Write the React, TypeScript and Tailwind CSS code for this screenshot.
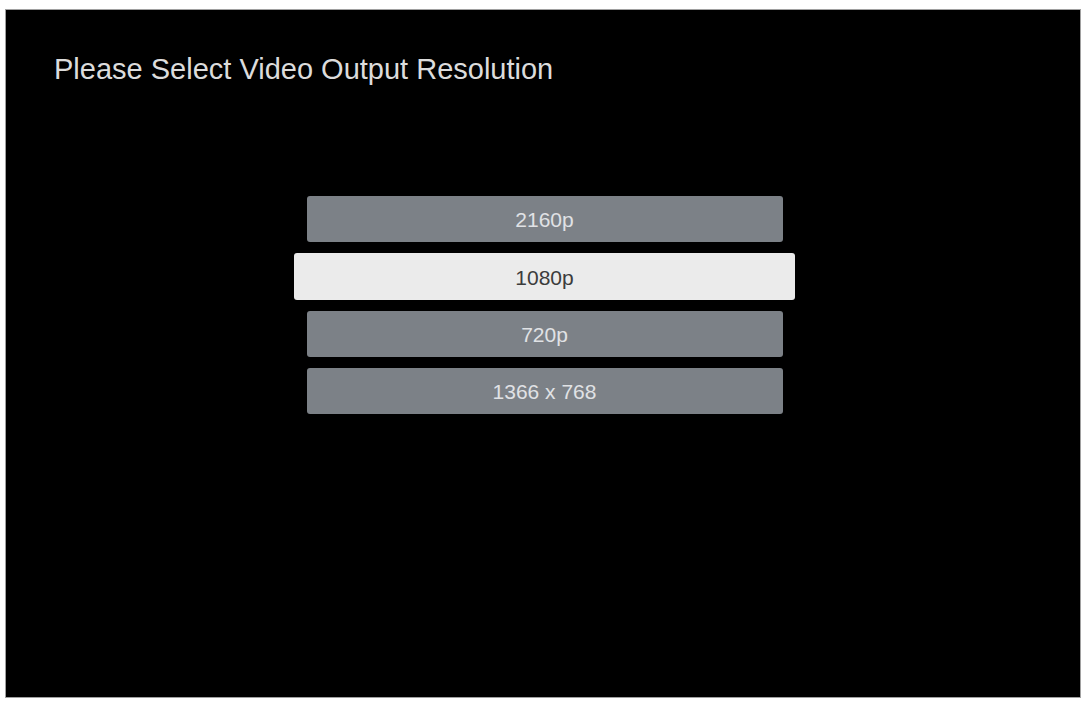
const resolutions = ['2160p', '1080p', '720p', '1366 x 768'];
const selected = '1080p';

export default function App() {
  return (
    <div className="w-[1085px] h-[701px] bg-white pt-[9px] pl-[5px]">
      <div
        className="w-[1076px] h-[689px] bg-black border border-[#a0a0a0] flex flex-col"
        style={{ fontFamily: '"Liberation Sans", Arial, sans-serif' }}
      >
        <h1 className="pl-[48px] pt-[42px] text-[29px] leading-[35px] text-[#dcdcdc] font-normal">
          Please Select Video Output Resolution
        </h1>

        <div className="mt-[109px] flex flex-col items-center gap-[11px] pl-[3px]">
          {resolutions.map((res) =>
            res === selected ? (
              <div
                key={res}
                className="w-[501px] h-[47px] rounded-[3px] bg-[#ebebeb] flex items-center justify-center pt-[2px] text-[21px] text-[#3c3c3c]"
              >
                {res}
              </div>
            ) : (
              <div
                key={res}
                className="w-[476px] h-[46px] rounded-[3px] bg-[#7c8187] flex items-center justify-center pt-[2px] text-[21px] text-[#e0e2e5]"
              >
                {res}
              </div>
            )
          )}
        </div>
      </div>
    </div>
  );
}
